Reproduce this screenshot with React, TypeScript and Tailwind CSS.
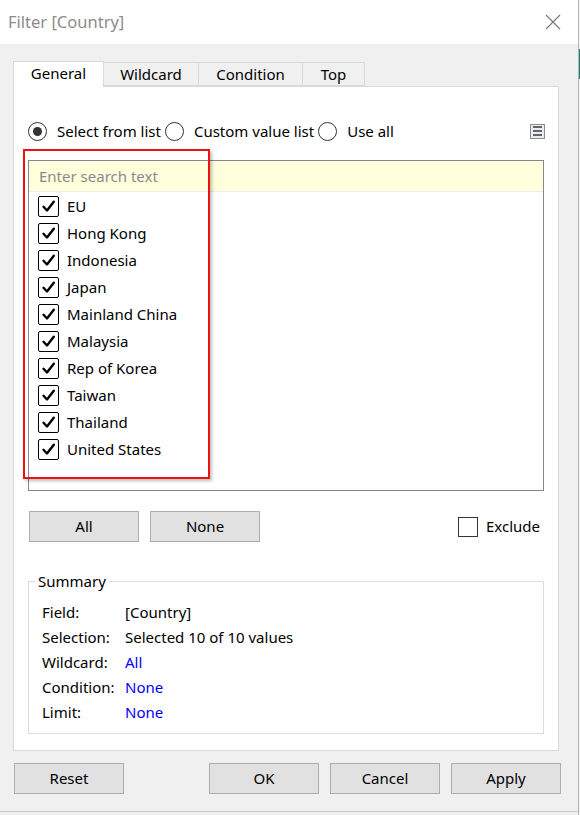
import React from "react";

const countries = [
  "EU",
  "Hong Kong",
  "Indonesia",
  "Japan",
  "Mainland China",
  "Malaysia",
  "Rep of Korea",
  "Taiwan",
  "Thailand",
  "United States",
];

const summary: { label: string; value: string; blue?: boolean }[] = [
  { label: "Field:", value: "[Country]" },
  { label: "Selection:", value: "Selected 10 of 10 values" },
  { label: "Wildcard:", value: "All", blue: true },
  { label: "Condition:", value: "None", blue: true },
  { label: "Limit:", value: "None", blue: true },
];

function Radio({ checked, label }: { checked?: boolean; label: string }) {
  return (
    <label className="flex items-center">
      <span className="w-[19px] h-[19px] rounded-full border border-[#333] bg-white flex items-center justify-center">
        {checked && <span className="w-[9px] h-[9px] rounded-full bg-[#333]" />}
      </span>
      <span className="ml-[10px] text-black">{label}</span>
    </label>
  );
}

function CheckBox({ checked }: { checked?: boolean }) {
  return (
    <span className="w-[21px] h-[21px] rounded-[2px] border-[1.5px] border-black bg-white flex items-center justify-center shrink-0">
      {checked && (
        <svg width="15" height="15" viewBox="0 0 15 15">
          <path
            d="M2.5 7.8 L6 11.5 L12.8 2.8"
            fill="none"
            stroke="black"
            strokeWidth="2.4"
            strokeLinecap="round"
            strokeLinejoin="round"
          />
        </svg>
      )}
    </span>
  );
}

function Btn({ children, className = "" }: { children: React.ReactNode; className?: string }) {
  return (
    <button
      className={`w-[110px] h-[31px] bg-[#e1e1e1] border border-[#adadad] text-black text-[15px] ${className}`}
    >
      {children}
    </button>
  );
}

export default function App() {
  return (
    <div
      className="relative w-[580px] h-[815px] bg-[#f0f0f0] overflow-hidden text-[15px] text-black"
      style={{ fontFamily: '"Noto Sans", "Open Sans", sans-serif' }}
    >
      {/* window edge strip */}
      <div className="absolute right-0 top-0 w-[2px] h-full bg-[#f4f4f4] border-l border-[#b5b5b5]">
        <div className="mt-[49px] h-[30px] bg-[#11866a]" />
      </div>

      <div className="w-[578px] h-[812px] border-b border-[#c9c9c9]">
        {/* title bar */}
        <div className="h-[44px] bg-white flex items-center justify-between pl-[8px] pr-[17px]">
          <span className="text-[16.5px] text-[#8c8c8c]">Filter [Country]</span>
          <svg width="16" height="16" viewBox="0 0 16 16">
            <path d="M1 1 L15 15 M15 1 L1 15" stroke="#777" strokeWidth="1.1" />
          </svg>
        </div>

        <div className="pl-[13px] pr-[19px]">
          {/* tabs */}
          <div className="flex items-end h-[42px] relative z-10">
            <div className="w-[91px] h-[26px] bg-white border border-[#d9d9d9] border-b-0 flex items-start justify-center -mb-px">
              General
            </div>
            <div className="w-[95px] h-[24px] border border-l-0 border-[#d9d9d9] flex items-center justify-center">
              Wildcard
            </div>
            <div className="w-[104px] h-[24px] border border-l-0 border-[#d9d9d9] flex items-center justify-center">
              Condition
            </div>
            <div className="w-[62px] h-[24px] border border-l-0 border-[#d9d9d9] flex items-center justify-center">
              Top
            </div>
          </div>

          {/* panel */}
          <div className="h-[665px] bg-white border border-[#d9d9d9] px-[14px]">
            <div className="mt-[34px] h-[20px] flex items-center">
              <div className="flex items-center gap-[4px]">
                <Radio checked label="Select from list" />
                <Radio label="Custom value list" />
                <Radio label="Use all" />
              </div>
              <div className="ml-auto mr-[-1px] w-[15px] h-[15px] border border-[#8c8c8c] bg-[#ececec] flex flex-col items-center justify-center gap-[2px]">
                <span className="w-[9px] h-[2px] bg-[#5c6674]" />
                <span className="w-[9px] h-[2px] bg-[#5c6674]" />
                <span className="w-[9px] h-[2px] bg-[#5c6674]" />
              </div>
            </div>

            {/* list */}
            <div className="mt-[19px] h-[331px] border border-[#828790] bg-white">
              <div className="h-[31px] bg-[#ffffdc] border-b border-[#ececec] flex items-center pl-[10px] text-[#8a8a8a]">
                Enter search text
              </div>
              <div className="pt-[1px] pl-[9px]">
                {countries.map((c) => (
                  <div key={c} className="h-[27px] flex items-center">
                    <CheckBox checked />
                    <span className="ml-[8px]">{c}</span>
                  </div>
                ))}
              </div>
            </div>

            {/* buttons */}
            <div className="mt-[20px] flex items-center">
              <Btn className="ml-[1px]">All</Btn>
              <Btn className="ml-[11px]">None</Btn>
              <div className="ml-auto flex items-center pr-[4px]">
                <span className="w-[20px] h-[20px] border border-[#333] bg-white" />
                <span className="ml-[8px]">Exclude</span>
              </div>
            </div>

            {/* summary */}
            <fieldset className="mt-[28px] border border-[#dcdcdc] px-[13px] pb-[8px]">
              <legend className="ml-[-7px] px-[3px] leading-[22px]">Summary</legend>
              <div className="pt-[8px]">
                {summary.map((s) => (
                  <div key={s.label} className="h-[25px] flex items-center">
                    <span className="w-[83px]">{s.label}</span>
                    <span className={s.blue ? "text-[#0000ff]" : ""}>{s.value}</span>
                  </div>
                ))}
              </div>
            </fieldset>
          </div>

          {/* footer buttons */}
          <div className="mt-[12px] flex items-center">
            <Btn className="ml-[1px]">Reset</Btn>
            <Btn className="ml-auto">OK</Btn>
            <Btn className="ml-[11px]">Cancel</Btn>
            <Btn className="ml-[11px] mr-[-2px]">Apply</Btn>
          </div>
        </div>
      </div>

      {/* highlight annotation */}
      <div className="absolute left-[23px] top-[149px] w-[187px] h-[330px] border-2 border-[#ee1111] shadow-[2px_2px_3px_rgba(0,0,0,0.25)]" />
    </div>
  );
}
